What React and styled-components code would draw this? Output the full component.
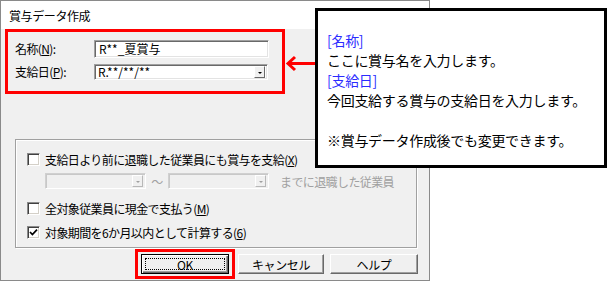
import React from "react";
import styled, { createGlobalStyle, css } from "styled-components";

const GlobalStyle = createGlobalStyle`
    html, body {
        margin: 0;
        padding: 0;
        background: #ffffff;
    }
    body {
        font-family: "Noto Sans CJK JP", "Liberation Sans", sans-serif;
        color: #000;
    }
`;

const Page = styled.div`
    position: relative;
    width: 610px;
    height: 281px;
    overflow: hidden;
    background: #fff;
`;

const Dialog = styled.div`
    box-sizing: border-box;
    width: 430px;
    height: 281px;
    border: 1px solid #8a8a8a;
    background: #f0f0f0;
    display: flex;
    flex-direction: column;
    font-size: 12px;
    letter-spacing: -0.6px;
`;

const TitleBar = styled.div`
    height: 28px;
    background: #fff;
    display: flex;
    align-items: center;
    padding-left: 8px;
    font-size: 12px;
    letter-spacing: -0.4px;
`;

const Highlight = styled.div`
    box-sizing: border-box;
    border: 3px solid #ff0000;
    ${({ $fields }) => $fields && css`
        width: 280px;
        margin-left: 4px;
        padding: 8px 0 11px 7px;
        display: flex;
        flex-direction: column;
        gap: 6px;
    `}
    ${({ $button }) => $button && css`
        padding: 2px 3px;
        display: flex;
    `}
`;

const FieldRow = styled.div`
    display: flex;
    align-items: center;
`;

const Label = styled.div`
    width: 79px;
    line-height: 16px;
`;

const sunken = css`
    box-sizing: border-box;
    border: 1px solid;
    border-color: #a0a0a0 #ffffff #ffffff #a0a0a0;
    box-shadow: inset 1px 1px 0 #696969, inset -1px -1px 0 #e3e3e3;
`;

const TextBox = styled.div`
    ${sunken};
    width: 175px;
    height: 18px;
    background: #fff;
    padding-left: 4px;
    line-height: 16px;
    letter-spacing: 0;
`;

const Combo = styled.div`
    ${sunken};
    display: flex;
    align-items: center;
    width: ${({ $w }) => $w || 174}px;
    height: 16px;
    padding: 0 2px 0 3px;
    background: ${({ $disabled }) => $disabled ? '#f0f0f0' : '#fff'};
    letter-spacing: 0;
    ${({ $disabled }) => $disabled && css`
        border-color: #d0d0d0 #fff #fff #d0d0d0;
        box-shadow: inset 1px 1px 0 #c8c8c8;
    `}
`;

const ComboText = styled.span`
    flex: 1;
    line-height: 14px;
`;

const DropButton = styled.div`
    box-sizing: border-box;
    width: 11px;
    height: 12px;
    background: #f0f0f0;
    border: 1px solid;
    border-color: #fff #696969 #696969 #fff;
    display: flex;
    align-items: center;
    justify-content: center;
    ${({ $disabled }) => $disabled && css`
        border-color: #fff #b8b8b8 #b8b8b8 #fff;
    `}
    &::after {
        content: "";
        border-left: 2px solid transparent;
        border-right: 2px solid transparent;
        border-top: 2px solid ${({ $disabled }) => $disabled ? '#a0a0a0' : '#000'};
        margin-top: 1px;
    }
`;

const GroupBox = styled.div`
    box-sizing: border-box;
    margin: 45px 0 0 14px;
    width: 402px;
    height: 109px;
    border: 1px solid #a0a0a0;
    box-shadow: 1px 1px 0 #fff, inset 1px 1px 0 #fff;
    padding: 11px 0 0 11px;
    display: flex;
    flex-direction: column;
`;

const OptionRow = styled.div`
    display: flex;
    align-items: center;
    height: 16px;
    margin-top: ${({ $mt }) => $mt || 0}px;
    ${({ $indent }) => $indent && css`
        padding-left: 18px;
    `}
`;

const CheckBox = styled.div`
    box-sizing: border-box;
    width: 13px;
    height: 13px;
    margin-right: 5px;
    background: #fff;
    border: 1px solid;
    border-color: #8a8a8a #ffffff #ffffff #8a8a8a;
    box-shadow: inset 1px 1px 0 #404040, inset -1px -1px 0 #d4d0c8;
    display: flex;
    align-items: center;
    justify-content: center;
`;

const Tilde = styled.span`
    color: #a0a0a0;
    width: 22px;
    text-align: center;
`;

const MutedText = styled.span`
    color: #a0a0a0;
    margin-left: 11px;
`;

const ButtonRow = styled.div`
    display: flex;
    align-items: center;
    justify-content: flex-end;
    margin-top: 1px;
    padding-right: 11px;
    height: 30px;
`;

const Button = styled.div`
    box-sizing: border-box;
    width: ${({ $w }) => $w || 86}px;
    height: 20px;
    margin-left: ${({ $ml }) => $ml || 0}px;
    background: #f0f0f0;
    border: 1px solid;
    border-color: #fff #696969 #696969 #fff;
    box-shadow: inset -1px -1px 0 #a0a0a0;
    display: flex;
    align-items: center;
    justify-content: center;
    letter-spacing: -0.4px;
    ${({ $default }) => $default && css`
        border: 1px solid #000;
        box-shadow: inset 1px 1px 0 #fff, inset -1px -1px 0 #696969, inset -2px -2px 0 #a0a0a0;
        padding: 3px;
    `}
`;

const FocusRing = styled.div`
    box-sizing: border-box;
    width: 100%;
    height: 100%;
    border: 1px dotted #000;
    display: flex;
    align-items: center;
    justify-content: center;
`;

const Arrow = styled.svg`
    position: absolute;
    left: 285px;
    top: 54px;
`;

const Callout = styled.div`
    position: absolute;
    box-sizing: border-box;
    left: 315px;
    top: 8px;
    width: 292px;
    height: 160px;
    border: 3px solid #000;
    background: #fff;
    padding: 19px 0 0 9px;
    font-size: 14px;
    line-height: 20px;
    letter-spacing: -0.3px;
`;

const Line = styled.div`
    height: 20px;
    white-space: nowrap;
    color: ${({ $heading }) => $heading ? '#2b2bff' : '#000'};
`;

const Check = () => (
    <svg width="9" height="9" viewBox="0 0 9 9">
        <polyline points="1,4 3.4,6.6 8,1.6" fill="none" stroke="#000" strokeWidth="1.7" />
    </svg>
);

export default function App() {
    return (
        <Page>
            <GlobalStyle />
            <Dialog>
                <TitleBar>賞与データ作成</TitleBar>
                <Highlight $fields>
                    <FieldRow>
                        <Label>名称(<u>N</u>):</Label>
                        <TextBox>R**_夏賞与</TextBox>
                    </FieldRow>
                    <FieldRow>
                        <Label>支給日(<u>P</u>):</Label>
                        <Combo>
                            <ComboText>R.**/**/**</ComboText>
                            <DropButton />
                        </Combo>
                    </FieldRow>
                </Highlight>
                <GroupBox>
                    <OptionRow>
                        <CheckBox />
                        支給日より前に退職した従業員にも賞与を支給(<u>X</u>)
                    </OptionRow>
                    <OptionRow $mt={6} $indent>
                        <Combo $disabled $w={101}>
                            <ComboText />
                            <DropButton $disabled />
                        </Combo>
                        <Tilde>〜</Tilde>
                        <Combo $disabled $w={101}>
                            <ComboText />
                            <DropButton $disabled />
                        </Combo>
                        <MutedText>までに退職した従業員</MutedText>
                    </OptionRow>
                    <OptionRow $mt={11}>
                        <CheckBox />
                        全対象従業員に現金で支払う(<u>M</u>)
                    </OptionRow>
                    <OptionRow $mt={8}>
                        <CheckBox><Check /></CheckBox>
                        対象期間を6か月以内として計算する(<u>6</u>)
                    </OptionRow>
                </GroupBox>
                <ButtonRow>
                    <Highlight $button>
                        <Button $default $w={88}>
                            <FocusRing>OK</FocusRing>
                        </Button>
                    </Highlight>
                    <Button $ml={3}>キャンセル</Button>
                    <Button $ml={6} $w={88}>ヘルプ</Button>
                </ButtonRow>
            </Dialog>
            <Arrow width="34" height="20" viewBox="0 0 34 20">
                <path d="M3 9.5 H33 M10 3 L3 9.5 L10 16" fill="none" stroke="#ff0000" strokeWidth="3" />
            </Arrow>
            <Callout>
                <Line $heading>[名称]</Line>
                <Line>ここに賞与名を入力します。</Line>
                <Line $heading>[支給日]</Line>
                <Line>今回支給する賞与の支給日を入力します。</Line>
                <Line />
                <Line>※賞与データ作成後でも変更できます。</Line>
            </Callout>
        </Page>
    );
}
